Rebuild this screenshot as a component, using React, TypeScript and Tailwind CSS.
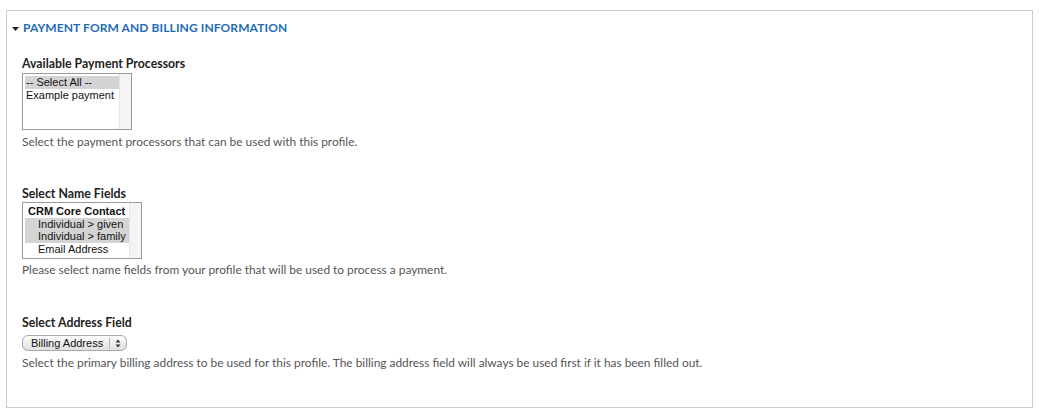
import React from "react";

const lato = { fontFamily: "Lato, 'Open Sans', sans-serif" };

function ListBox({
  width,
  children,
}: {
  width: string;
  children: React.ReactNode;
}) {
  return (
    <div
      className={`flex h-[57px] ${width} border border-[#9a9a9a] bg-white`}
      style={{ fontFamily: "'Liberation Sans', Arial, sans-serif" }}
    >
      <div className="flex-1 pt-[2px] pl-[2px] text-[11px] leading-[12.5px] text-[#111]">
        {children}
      </div>
      <div className="w-[12px] border-l border-[#e4e4e4] bg-[#f4f4f4]" />
    </div>
  );
}

export default function App() {
  return (
    <div className="bg-white w-[1039px] h-[417px] pt-[10px] px-[6px]" style={lato}>
      <div className="h-[398px] border border-[#cccccc] pl-[15px]">
        <div className="flex items-center h-[32px] pt-[2px] -ml-[10px]">
          <svg width="7" height="4" viewBox="0 0 7 4" className="mr-[4px] mt-[1px]">
            <polygon points="0,0 7,0 3.5,4" fill="#222" />
          </svg>
          <span className="text-[12px] font-bold tracking-[0.1px] text-[#1f6cb8]">
            PAYMENT FORM AND BILLING INFORMATION
          </span>
        </div>

        <div className="mt-[13px]">
          <div className="text-[12.3px] font-bold text-[#222] leading-[16px]">
            Available Payment Processors
          </div>
          <div className="mt-[1px]">
            <ListBox width="w-[110px]">
              <div className="bg-[#d4d4d4] pl-[1px]">-- Select All --</div>
              <div className="pl-[1px]">Example payment</div>
            </ListBox>
          </div>
          <div className="mt-[4px] text-[11.9px] leading-[16px] text-[#555]">
            Select the payment processors that can be used with this profile.
          </div>
        </div>

        <div className="mt-[36px]">
          <div className="text-[12.3px] font-bold text-[#222] leading-[16px]">
            Select Name Fields
          </div>
          <div className="mt-[0px]">
            <ListBox width="w-[120px]">
              <div className="font-bold pl-[3px]">CRM Core Contact</div>
              <div className="bg-[#d4d4d4] pl-[13px]">Individual &gt; given</div>
              <div className="bg-[#d4d4d4] pl-[13px]">Individual &gt; family</div>
              <div className="pl-[13px]">Email Address</div>
            </ListBox>
          </div>
          <div className="mt-[3px] text-[11.9px] leading-[16px] text-[#555]">
            Please select name fields from your profile that will be used to process a payment.
          </div>
        </div>

        <div className="mt-[37px]">
          <div className="text-[12.3px] font-bold text-[#222] leading-[16px]">
            Select Address Field
          </div>
          <div className="mt-[4px] flex">
            <div
              className="flex items-center h-[16px] w-[105px] rounded-[6px] border border-[#a8a8a8] bg-gradient-to-b from-[#fdfdfd] to-[#e0e0e0] text-[11px] text-[#111]"
              style={{ fontFamily: "'Liberation Sans', Arial, sans-serif" }}
            >
              <span className="flex-1 pl-[8px] leading-[14px]">Billing Address</span>
              <span className="h-[11px] border-l border-[#b5b5b5]" />
              <svg width="16" height="11" viewBox="0 0 16 11">
                <polygon points="5.5,4.5 10.5,4.5 8,1.5" fill="#333" />
                <polygon points="5.5,6.5 10.5,6.5 8,9.5" fill="#333" />
              </svg>
            </div>
          </div>
          <div className="mt-[4px] text-[11.9px] leading-[16px] text-[#555]">
            Select the primary billing address to be used for this profile. The billing address field will always be used first if it has been filled out.
          </div>
        </div>
      </div>
    </div>
  );
}
